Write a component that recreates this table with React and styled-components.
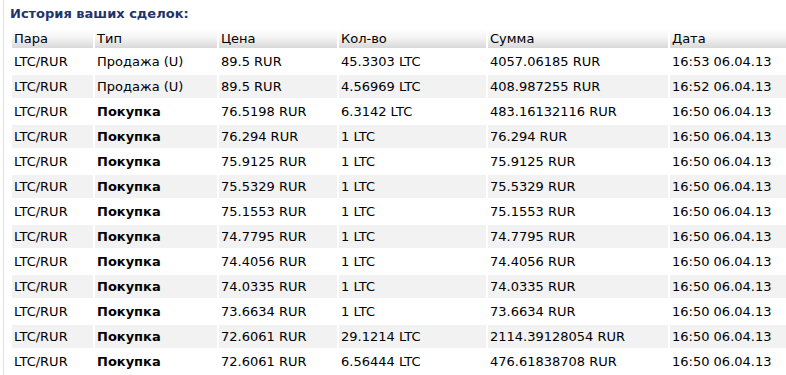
import React from "react";
import styled, { createGlobalStyle } from "styled-components";

const Global = createGlobalStyle`
  html, body { margin: 0; padding: 0; background: #fff; overflow: hidden; }
  body { font-family: "DejaVu Sans", Verdana, sans-serif; }
`;

const Panel = styled.div`
  margin-left: 3px;
  border-left: 1px solid #e2e2e2;
  padding-left: 6px;
  min-height: 375px;
  box-sizing: border-box;
`;

const Title = styled.div`
  font-weight: bold;
  font-size: 13px;
  color: #22336b;
  height: 27px;
  line-height: 15px;
  padding-top: 6px;
  box-sizing: border-box;
`;

const Table = styled.table`
  border-collapse: separate;
  border-spacing: 2px;
  table-layout: fixed;
  width: 782px;
  margin: 0;
  font-size: 13px;
  color: #000;
`;

const HeadCell = styled.th`
  box-sizing: border-box;
  width: ${(p) => p.$w}px;
  height: 19px;
  padding: 0 2px;
  text-align: left;
  font-weight: normal;
  white-space: nowrap;
  background: linear-gradient(to bottom, #ffffff 0%, #f4f4f4 45%, #d9d9d9 100%);
`;

const Row = styled.tr`
  background: ${(p) => (p.$alt ? "#f2f2f2" : "#ffffff")};
`;

const Cell = styled.td`
  box-sizing: border-box;
  height: 23px;
  padding: 0 2px;
  white-space: nowrap;
  font-weight: ${(p) => (p.$bold ? "bold" : "normal")};
`;

const cols = [
  ["Пара", 81],
  ["Тип", 122],
  ["Цена", 118],
  ["Кол-во", 147],
  ["Сумма", 180],
  ["Дата", 120],
];

const rows = [
  ["Продажа (U)", "89.5 RUR", "45.3303 LTC", "4057.06185 RUR", "16:53 06.04.13"],
  ["Продажа (U)", "89.5 RUR", "4.56969 LTC", "408.987255 RUR", "16:52 06.04.13"],
  ["Покупка", "76.5198 RUR", "6.3142 LTC", "483.16132116 RUR", "16:50 06.04.13"],
  ["Покупка", "76.294 RUR", "1 LTC", "76.294 RUR", "16:50 06.04.13"],
  ["Покупка", "75.9125 RUR", "1 LTC", "75.9125 RUR", "16:50 06.04.13"],
  ["Покупка", "75.5329 RUR", "1 LTC", "75.5329 RUR", "16:50 06.04.13"],
  ["Покупка", "75.1553 RUR", "1 LTC", "75.1553 RUR", "16:50 06.04.13"],
  ["Покупка", "74.7795 RUR", "1 LTC", "74.7795 RUR", "16:50 06.04.13"],
  ["Покупка", "74.4056 RUR", "1 LTC", "74.4056 RUR", "16:50 06.04.13"],
  ["Покупка", "74.0335 RUR", "1 LTC", "74.0335 RUR", "16:50 06.04.13"],
  ["Покупка", "73.6634 RUR", "1 LTC", "73.6634 RUR", "16:50 06.04.13"],
  ["Покупка", "72.6061 RUR", "29.1214 LTC", "2114.39128054 RUR", "16:50 06.04.13"],
  ["Покупка", "72.6061 RUR", "6.56444 LTC", "476.61838708 RUR", "16:50 06.04.13"],
];

export default function App() {
  return (
    <>
      <Global />
      <Panel>
        <Title>История ваших сделок:</Title>
        <Table>
          <thead>
            <tr>
              {cols.map(([name, w]) => (
                <HeadCell key={name} $w={w}>
                  {name}
                </HeadCell>
              ))}
            </tr>
          </thead>
          <tbody>
            {rows.map((r, i) => (
              <Row key={i} $alt={i % 2 === 1}>
                <Cell>LTC/RUR</Cell>
                <Cell $bold={r[0] === "Покупка"}>{r[0]}</Cell>
                <Cell>{r[1]}</Cell>
                <Cell>{r[2]}</Cell>
                <Cell>{r[3]}</Cell>
                <Cell>{r[4]}</Cell>
              </Row>
            ))}
          </tbody>
        </Table>
      </Panel>
    </>
  );
}
